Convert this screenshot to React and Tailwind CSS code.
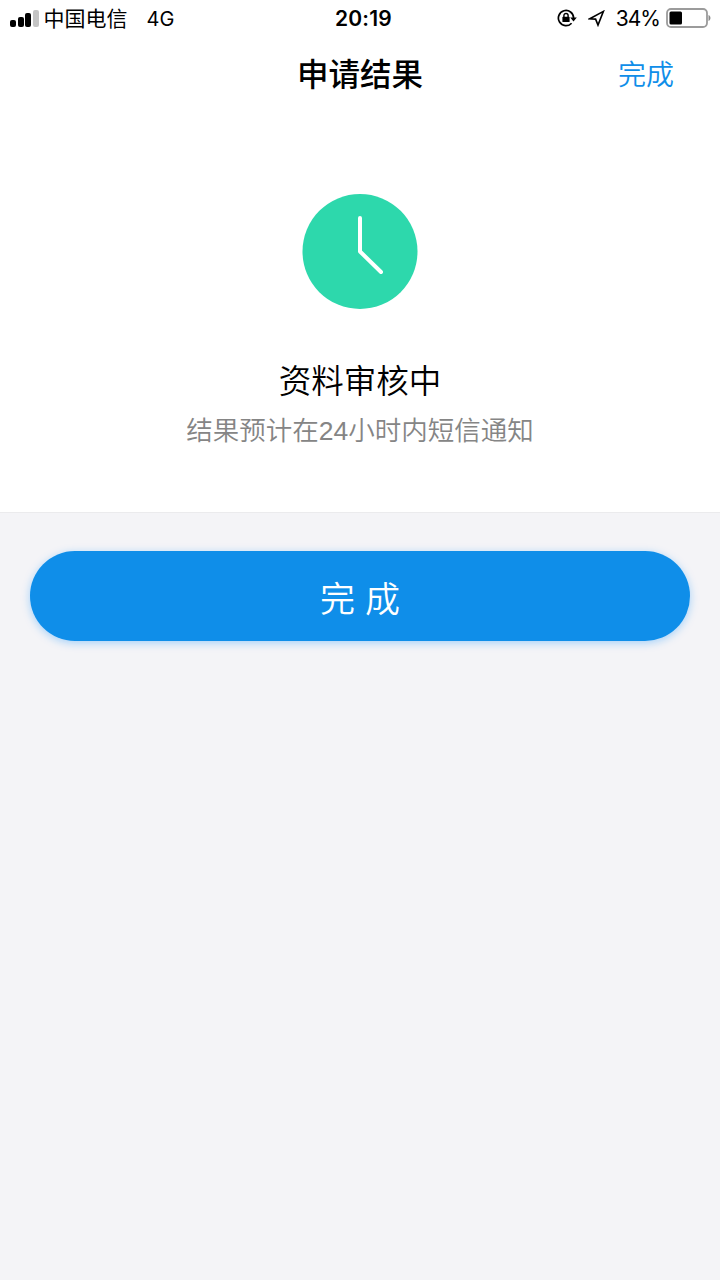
const bars = ['h-[7px] bg-black', 'h-[10px] bg-black', 'h-[14px] bg-black', 'h-[17px] bg-[#c4c4c4]']

function StatusBar() {
  return (
    <div className="grid grid-cols-3 items-center h-9 pl-2.5 pr-[9px] text-black">
      <div className="flex items-center">
        <div className="flex items-end gap-[1.5px] h-[17px]">
          {bars.map(bar => (
            <span key={bar} className={`w-[6px] rounded-[2px] ${bar}`} />
          ))}
        </div>
        <span className="ml-[5px] -mt-0.5 text-[21px] leading-none whitespace-nowrap">中国电信</span>
        <span className="ml-[19px] mt-px font-[Inter] text-[20px] leading-none">4G</span>
      </div>

      <span className="pl-[6px] text-center font-[Inter] font-semibold text-[21px] leading-none tracking-[0.2px]">20:19</span>

      <div className="flex items-center justify-end">
        {/* Rotation lock */}
        <svg width="20" height="18" viewBox="0 0 20 18" fill="none" stroke="#000" strokeWidth="1.7">
          <path d="M14.6 14.2A7.6 7.6 0 1 1 16.6 9" />
          <path d="M13.2 8.5h6.6l-3.3 4z" fill="#000" stroke="none" />
          <rect x="5.4" y="7.8" width="7.2" height="5.2" rx="0.6" fill="#000" stroke="none" />
          <path d="M6.9 8.3V6.6a2.1 2.1 0 0 1 4.2 0v1.7" strokeWidth="1.4" />
        </svg>
        {/* Location */}
        <svg className="ml-[11px]" width="17" height="17" viewBox="0 0 17 17" fill="none" stroke="#000" strokeWidth="1.6" strokeLinejoin="miter">
          <path d="M15.4 1.4L1.8 8.8l5.8.3 2.4 6z" />
        </svg>
        <span className="ml-[11px] mt-px font-[Inter] text-[21px] leading-none tracking-[-1px]">34%</span>
        {/* Battery */}
        <svg className="ml-[6px]" width="45" height="20" viewBox="0 0 45 20">
          <rect x="1" y="1" width="40" height="18" rx="4" fill="none" stroke="#9b9b9b" strokeWidth="1.8" />
          <rect x="3.5" y="3.5" width="12.5" height="13" rx="1.5" fill="#000" />
          <path d="M42.5 7c2.6 1 2.6 5 0 6z" fill="#8a8a8a" />
        </svg>
      </div>
    </div>
  )
}

export default function App() {
  return (
    <div className="min-h-screen bg-[#f4f4f7] font-['Noto_Sans_CJK_SC',sans-serif]">
      <div className="h-[513px] bg-white border-b border-[#ebebed]">
        <StatusBar />

        {/* Nav bar */}
        <div className="grid grid-cols-3 items-center h-[73px] px-[46px]">
          <h1 className="col-start-2 text-center font-medium text-[31.5px] leading-none text-black">申请结果</h1>
          <button className="justify-self-end text-[28px] leading-none font-[350] text-[#0f8ee9]">完成</button>
        </div>

        {/* Review status */}
        <div className="flex flex-col items-center pt-[85px]">
          <svg width="116" height="115" viewBox="0 0 116 115">
            <circle cx="58" cy="57.5" r="57.5" fill="#2dd8ac" />
            <path d="M58 24v33.5L79 78" fill="none" stroke="#fff" strokeWidth="4" strokeLinecap="round" strokeLinejoin="round" />
          </svg>
          <p className="mt-[53px] text-[32.5px] leading-[34px] font-[350] text-black">资料审核中</p>
          <p className="mt-4 text-[26.5px] leading-[34px] font-[350] text-[#858585]">
            结果预计在<span className="font-['Liberation_Sans']">24</span>小时内短信通知
          </p>
        </div>
      </div>

      <div className="px-[30px] pt-[38px]">
        <button className="w-full h-[90px] rounded-full bg-[#0f8ee9] text-white text-[35px] leading-none font-[350] [word-spacing:2px] shadow-[0_2px_8px_rgba(15,142,255,0.35)]">
          完 成
        </button>
      </div>
    </div>
  )
}
